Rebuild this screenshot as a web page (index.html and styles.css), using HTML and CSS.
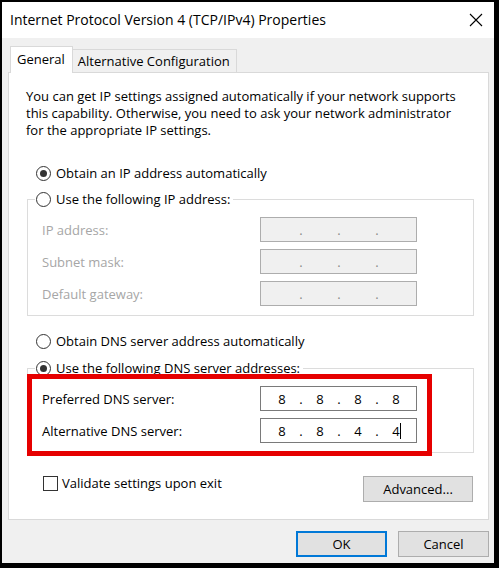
FILE: index.html
```html
<!DOCTYPE html>
<html>
<head>
<meta charset="utf-8">
<link rel="stylesheet" href="styles.css">
</head>
<body>
<div class="window">
  <div class="titlebar">
    <span class="title">Internet Protocol Version 4 (TCP/IPv4) Properties</span>
    <svg class="close" width="14" height="14" viewBox="0 0 14 14"><path d="M1 1 L13 13 M13 1 L1 13" stroke="#000" stroke-width="1.1" fill="none"/></svg>
  </div>
  <div class="client">
    <div class="tabs">
      <div class="tab active">General</div>
      <div class="tab">Alternative Configuration</div>
    </div>
    <div class="panel">
      <p class="desc">You can get IP settings assigned automatically if your network supports<br>this capability. Otherwise, you need to ask your network administrator<br>for the appropriate IP settings.</p>

      <div class="radio-row first"><span class="radio checked"></span><span>Obtain an IP address automatically</span></div>

      <fieldset class="group">
        <legend class="radio-row legend"><span class="radio"></span><span>Use the following IP address:</span></legend>
        <div class="fields">
          <span class="label disabled">IP address:</span>
          <div class="ipbox disabled"><span class="seg"></span><span class="dot">.</span><span class="seg"></span><span class="dot">.</span><span class="seg"></span><span class="dot">.</span><span class="seg"></span></div>
          <span class="label disabled">Subnet mask:</span>
          <div class="ipbox disabled"><span class="seg"></span><span class="dot">.</span><span class="seg"></span><span class="dot">.</span><span class="seg"></span><span class="dot">.</span><span class="seg"></span></div>
          <span class="label disabled">Default gateway:</span>
          <div class="ipbox disabled"><span class="seg"></span><span class="dot">.</span><span class="seg"></span><span class="dot">.</span><span class="seg"></span><span class="dot">.</span><span class="seg"></span></div>
        </div>
      </fieldset>

      <div class="radio-row dns-auto"><span class="radio"></span><span>Obtain DNS server address automatically</span></div>

      <fieldset class="group dns">
        <legend class="radio-row legend"><span class="radio checked"></span><span>Use the following DNS server addresses:</span></legend>
        <div class="fields">
          <span class="label">Preferred DNS server:</span>
          <div class="ipbox"><span class="seg">8</span><span class="dot">.</span><span class="seg">8</span><span class="dot">.</span><span class="seg">8</span><span class="dot">.</span><span class="seg">8</span></div>
          <span class="label">Alternative DNS server:</span>
          <div class="ipbox"><span class="seg">8</span><span class="dot">.</span><span class="seg">8</span><span class="dot">.</span><span class="seg">4</span><span class="dot">.</span><span class="seg">4<span class="caret"></span></span></div>
        </div>
        <div class="highlight"></div>
      </fieldset>

      <div class="bottom-row">
        <label class="check-row"><span class="checkbox"></span><span>Validate settings upon exit</span></label>
        <button class="btn advanced">Advanced...</button>
      </div>
    </div>
    <div class="actions">
      <button class="btn ok">OK</button>
      <button class="btn">Cancel</button>
    </div>
  </div>
</div>
</body>
</html>
```

FILE: styles.css
```css
* { box-sizing: border-box; }
html, body { margin: 0; padding: 0; }
body {
  background: #000;
  width: 499px;
  height: 568px;
  padding: 2px 5px 5px 2px;
  font-family: "Open Sans", "Noto Sans", sans-serif;
  font-size: 13px;
  color: #000;
}
.window {
  width: 492px;
  height: 561px;
  display: flex;
  flex-direction: column;
  background: #f0f0f0;
}
.titlebar {
  height: 36px;
  background: #fff;
  display: flex;
  align-items: center;
  justify-content: space-between;
  padding: 0 11px 0 8px;
}
.title {
  font-size: 14px;
  color: #000;
  white-space: nowrap;
  margin-top: -1px;
}
.close { display: block; }
.client {
  flex: 1;
  display: flex;
  flex-direction: column;
  padding: 8px 5px 0 6px;
}
.tabs {
  display: flex;
  align-items: flex-end;
  height: 26px;
  padding-left: 2px;
  position: relative;
  z-index: 1;
}
.tab {
  height: 23px;
  padding: 0 6px 0 5px;
  border: 1px solid #d9d9d9;
  border-bottom: none;
  background: #f0f0f0;
  display: flex;
  align-items: center;
  white-space: nowrap;
}
.tab.active {
  height: 27px;
  margin-bottom: -1px;
  background: #fff;
  padding: 0 7px 2px 6px;
}
.tab.active + .tab { border-left: none; }
.panel {
  width: 481px;
  height: 448px;
  background: #fff;
  border: 1px solid #d9d9d9;
  padding: 15px 14px 0 18px;
}
.desc {
  margin: 0 0 0 -1px;
  line-height: 17px;
  white-space: nowrap;
}
.radio-row {
  display: flex;
  align-items: center;
  height: 18px;
  white-space: nowrap;
}
.radio-row.first { margin-top: 25px; padding-left: 9px; }
.radio-row.dns-auto { margin-top: 16px; padding-left: 9px; }
.radio {
  width: 15px;
  height: 15px;
  border: 1px solid #333;
  border-radius: 50%;
  margin-right: 5px;
  display: flex;
  align-items: center;
  justify-content: center;
  flex: none;
  background: #fff;
}
.radio.checked::after {
  content: "";
  width: 7px;
  height: 7px;
  border-radius: 50%;
  background: #333;
}
.group {
  margin: 8px 0 0 0;
  padding: 9px 0 9px 14px;
  border: 1px solid #dcdcdc;
  width: 447px;
  min-width: 0;
}
.group.dns { margin-top: 9px; position: relative; }
.legend {
  padding: 0 3px 0 1px;
  margin-left: -7px;
}
.fields {
  display: grid;
  grid-template-columns: 218px 157px;
  grid-auto-rows: 25px;
  row-gap: 7px;
  align-items: center;
}
.label { white-space: nowrap; }
.disabled { color: #a6a6a6; }
.ipbox {
  height: 25px;
  border: 1px solid #7a7a7a;
  background: #fff;
  display: flex;
  align-items: center;
  padding-left: 6px;
  font-size: 13px;
  color: #000;
}
.ipbox.disabled {
  background: #f0f0f0;
  border-color: #adadad;
  color: #8a8a8a;
}
.seg {
  width: 30px;
  text-align: center;
  position: relative;
}
.dot {
  width: 8px;
  text-align: center;
}
.caret {
  position: absolute;
  top: 1px;
  left: 19px;
  width: 1px;
  height: 16px;
  background: #000;
}
.highlight {
  position: absolute;
  left: -1px;
  top: -3px;
  width: 405px;
  height: 82px;
  border: 5px solid #e60000;
  pointer-events: none;
}
.bottom-row {
  display: flex;
  justify-content: space-between;
  align-items: flex-start;
  margin-top: 22px;
  width: 446px;
}
.check-row {
  display: flex;
  align-items: center;
  height: 16px;
  padding-left: 16px;
  white-space: nowrap;
}
.checkbox {
  width: 15px;
  height: 15px;
  border: 1px solid #333;
  background: #fff;
  margin-right: 4px;
  flex: none;
}
.btn {
  font-family: inherit;
  font-size: 13px;
  color: #000;
  height: 26px;
  width: 91px;
  background: #e1e1e1;
  border: 1px solid #adadad;
  padding: 0;
  margin: 0;
}
.btn.advanced { width: 110px; margin-top: 1px; }
.btn.ok { border: 2px solid #0078d7; }
.actions {
  display: flex;
  justify-content: flex-end;
  gap: 11px;
  margin-top: 11px;
}
```
